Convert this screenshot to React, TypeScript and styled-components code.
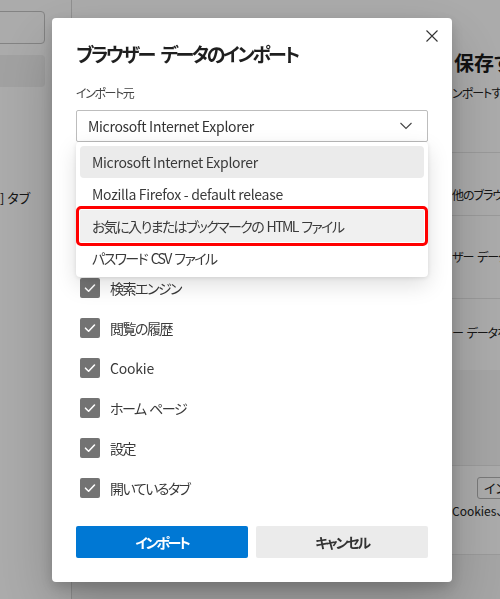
import styled, { createGlobalStyle } from 'styled-components';

const GlobalStyle = createGlobalStyle`
  html, body {
    margin: 0;
    padding: 0;
    width: 100%;
    height: 100%;
    overflow: hidden;
  }
  body {
    font-family: "Noto Sans CJK JP", "Noto Sans", sans-serif;
    font-feature-settings: "palt";
    color: #1a1a1a;
    background: #fff;
  }
  #root {
    height: 100%;
  }
`;

const isJapanese = (s: string) => /[^\x00-\x7F]/.test(s);

const Page = styled.div`
  display: flex;
  height: 100vh;
  overflow: hidden;
`;

const Sidebar = styled.aside`
  width: 72px;
  flex-shrink: 0;
  box-sizing: border-box;
  border-right: 1px solid #d6d6d6;
  padding-top: 11px;
  display: flex;
  flex-direction: column;
  background: #fff;
`;

const SearchBox = styled.div`
  width: 50px;
  height: 33px;
  margin-left: -5px;
  box-sizing: border-box;
  border: 1px solid #c4c4c4;
  border-radius: 4px;
`;

const NavItem = styled.div<{ $active?: boolean }>`
  width: 50px;
  height: 32px;
  margin: 11px 0 0 -5px;
  border-radius: 4px;
  background: ${(p) => (p.$active ? '#f1f1f1' : 'transparent')};
`;

const SideText = styled.div`
  margin-top: 101px;
  font-size: 13px;
  line-height: 20px;
  white-space: nowrap;
  color: #222;
`;

const Main = styled.main`
  flex: 1;
  background: #f6f6f6;
  display: flex;
  flex-direction: column;
  min-width: 0;
`;

const Card = styled.section`
  background: #fff;
  padding-left: 380px;
  white-space: nowrap;
`;

const BottomCard = styled(Card)`
  margin-top: 95px;
  height: 90px;
  box-sizing: border-box;
  border-top: 1px solid #e6e6e6;
  border-bottom: 1px solid #e6e6e6;
  padding-top: 8px;
`;

const PageTitle = styled.h1`
  margin: 49px 0 0 2px;
  font-size: 20px;
  line-height: 28px;
  font-weight: 600;
`;

const PageSub = styled.div`
  margin-top: 7px;
  font-size: 12px;
  line-height: 18px;
  color: #222;
  letter-spacing: -1px;
`;

const SettingRow = styled.div<{ $pad: number; $h: number; $gap?: number }>`
  margin: ${(p) => p.$gap ?? 0}px 0 0 -380px;
  padding-left: 380px;
  border-top: 1px solid #e6e6e6;
  height: ${(p) => p.$h}px;
  box-sizing: border-box;
  padding-top: ${(p) => p.$pad}px;
  font-size: 12px;
  line-height: 18px;
  color: #222;
  letter-spacing: -1px;
  word-spacing: 2px;
`;

const OutlineButton = styled.div`
  margin-left: 25px;
  display: inline-block;
  height: 22px;
  box-sizing: border-box;
  border: 1px solid #b5b5b5;
  border-radius: 3px;
  padding: 0 6px;
  font-size: 13px;
  line-height: 20px;
`;

const SmallNote = styled.div`
  margin-top: 4px;
  font-size: 12px;
  line-height: 16px;
  color: #222;
`;

const Overlay = styled.div`
  position: fixed;
  inset: 0;
  background: rgba(0, 0, 0, 0.33);
  display: flex;
  align-items: flex-start;
  padding: 18px 0 0 52px;
`;

const Dialog = styled.div`
  position: relative;
  width: 400px;
  box-sizing: border-box;
  background: #fff;
  border-radius: 4px;
  padding: 22px 24px 24px;
  box-shadow: 0 25px 57px rgba(0, 0, 0, 0.22), 0 5px 14px rgba(0, 0, 0, 0.18);
`;

const Title = styled.h2`
  margin: 0;
  font-size: 19px;
  line-height: 28px;
  font-weight: 600;
  letter-spacing: -2.5px;
  word-spacing: 5px;
  color: #1f1f1f;
`;

const CloseButton = styled.button`
  position: absolute;
  top: 12px;
  right: 14px;
  width: 12px;
  height: 12px;
  padding: 0;
  border: none;
  background: none;
  display: flex;
`;

const FieldLabel = styled.div`
  margin-top: 17px;
  font-size: 12px;
  line-height: 16px;
  letter-spacing: -1.4px;
  color: #444;
`;

const SelectWrap = styled.div`
  position: relative;
  margin-top: 9px;
`;

const SelectBox = styled.div`
  height: 32px;
  box-sizing: border-box;
  border: 1px solid #bdbdbd;
  border-radius: 2px;
  padding: 0 15px 0 11px;
  display: flex;
  align-items: center;
  justify-content: space-between;
  font-size: 14px;
  letter-spacing: -0.3px;
  color: #333;
`;

const Menu = styled.ul`
  position: absolute;
  top: 100%;
  left: 0;
  right: 0;
  z-index: 2;
  margin: 0;
  padding: 4px 4px 3px;
  list-style: none;
  background: #fff;
  border-radius: 4px;
  box-shadow: 0 8px 22px rgba(0, 0, 0, 0.13), 0 1px 4px rgba(0, 0, 0, 0.1);
`;

const MenuItem = styled.li<{ $hover?: boolean; $marked?: boolean; $jp?: boolean }>`
  height: 32px;
  padding-left: 12px;
  display: flex;
  align-items: center;
  border-radius: ${(p) => (p.$marked ? 1 : 4)}px;
  font-size: 14px;
  letter-spacing: ${(p) => (p.$jp ? -1.6 : -0.3)}px;
  word-spacing: ${(p) => (p.$jp ? 2 : 0)}px;
  white-space: pre;
  color: #3a3a3a;
  background: ${(p) => (p.$hover ? '#ebebeb' : p.$marked ? '#f0f0f0' : 'transparent')};
  outline: ${(p) => (p.$marked ? '3px solid #ff0000' : 'none')};
  outline-offset: 1px;
`;

const SectionLabel = styled.div`
  margin-top: 22px;
  font-size: 12px;
  line-height: 16px;
  color: #444;
`;

const CheckList = styled.div`
  margin-top: 8px;
  display: flex;
  flex-direction: column;
`;

const CheckRow = styled.label<{ $jp?: boolean }>`
  height: 40px;
  display: flex;
  align-items: center;
  gap: 10px;
  padding-left: 4px;
  font-size: 14px;
  letter-spacing: ${(p) => (p.$jp ? -1.5 : -0.2)}px;
  word-spacing: 2px;
  white-space: pre;
  color: #3a3a3a;
`;

const CheckBox = styled.span`
  width: 20px;
  height: 20px;
  flex-shrink: 0;
  border-radius: 2px;
  background: #737373;
  display: flex;
  align-items: center;
  justify-content: center;
`;

const Actions = styled.div`
  margin-top: 18px;
  display: grid;
  grid-template-columns: 1fr 1fr;
  gap: 8px;
`;

const Button = styled.button<{ $primary?: boolean }>`
  height: 32px;
  border: none;
  border-radius: 2px;
  font-family: inherit;
  font-feature-settings: "palt";
  font-size: 14px;
  font-weight: 600;
  letter-spacing: -2.2px;
  background: ${(p) => (p.$primary ? '#0078d4' : '#ebebeb')};
  color: ${(p) => (p.$primary ? '#fff' : '#333')};
`;

const sources = [
  'Microsoft Internet Explorer',
  'Mozilla Firefox - default release',
  'お気に入りまたはブックマークの HTML ファイル',
  'パスワード CSV ファイル',
];

const items = [
  'お気に入りまたはブックマーク',
  '保存したパスワード',
  '検索エンジン',
  '閲覧の履歴',
  'Cookie',
  'ホーム ページ',
  '設定',
  '開いているタブ',
];

const Check = () => (
  <svg width="14" height="14" viewBox="0 0 14 14" fill="none">
    <path d="M2.5 7.2 L5.6 10.2 L11.5 4" stroke="#fff" strokeWidth="1.6" strokeLinecap="round" strokeLinejoin="round" />
  </svg>
);

export default function App() {
  return (
    <>
      <GlobalStyle />
      <Page>
        <Sidebar>
          <SearchBox />
          <NavItem $active />
          <SideText>] タブ</SideText>
        </Sidebar>
        <Main>
          <Card>
            <PageTitle>保存する</PageTitle>
            <PageSub>ンポートする</PageSub>
            <SettingRow $gap={50} $pad={33} $h={63}>
              他のブラウザー
            </SettingRow>
            <SettingRow $pad={32} $h={83}>
              ザー データ
            </SettingRow>
            <SettingRow $pad={25} $h={72}>
              ー データをインポート
            </SettingRow>
          </Card>
          <BottomCard>
            <OutlineButton>インポート</OutlineButton>
            <SmallNote>Cookies、その他</SmallNote>
          </BottomCard>
        </Main>
      </Page>

      <Overlay>
        <Dialog>
          <Title>ブラウザー データのインポート</Title>
          <CloseButton aria-label="閉じる">
            <svg width="12" height="12" viewBox="0 0 12 12">
              <path d="M0.5 0.5 L11.5 11.5 M11.5 0.5 L0.5 11.5" stroke="#333" strokeWidth="1.1" />
            </svg>
          </CloseButton>

          <FieldLabel>インポート元</FieldLabel>
          <SelectWrap>
            <SelectBox>
              <span>Microsoft Internet Explorer</span>
              <svg width="12" height="8" viewBox="0 0 12 8" fill="none">
                <path d="M0.5 1 L6 6.5 L11.5 1" stroke="#444" strokeWidth="1.1" />
              </svg>
            </SelectBox>
            <Menu>
              {sources.map((s, i) => (
                <MenuItem key={s} $hover={i === 0} $marked={i === 2} $jp={isJapanese(s)}>
                  {s}
                </MenuItem>
              ))}
            </Menu>
          </SelectWrap>

          <SectionLabel>インポートする項目を選択</SectionLabel>
          <CheckList>
            {items.map((item) => (
              <CheckRow key={item} $jp={isJapanese(item)}>
                <CheckBox>
                  <Check />
                </CheckBox>
                {item}
              </CheckRow>
            ))}
          </CheckList>

          <Actions>
            <Button $primary>インポート</Button>
            <Button>キャンセル</Button>
          </Actions>
        </Dialog>
      </Overlay>
    </>
  );
}
